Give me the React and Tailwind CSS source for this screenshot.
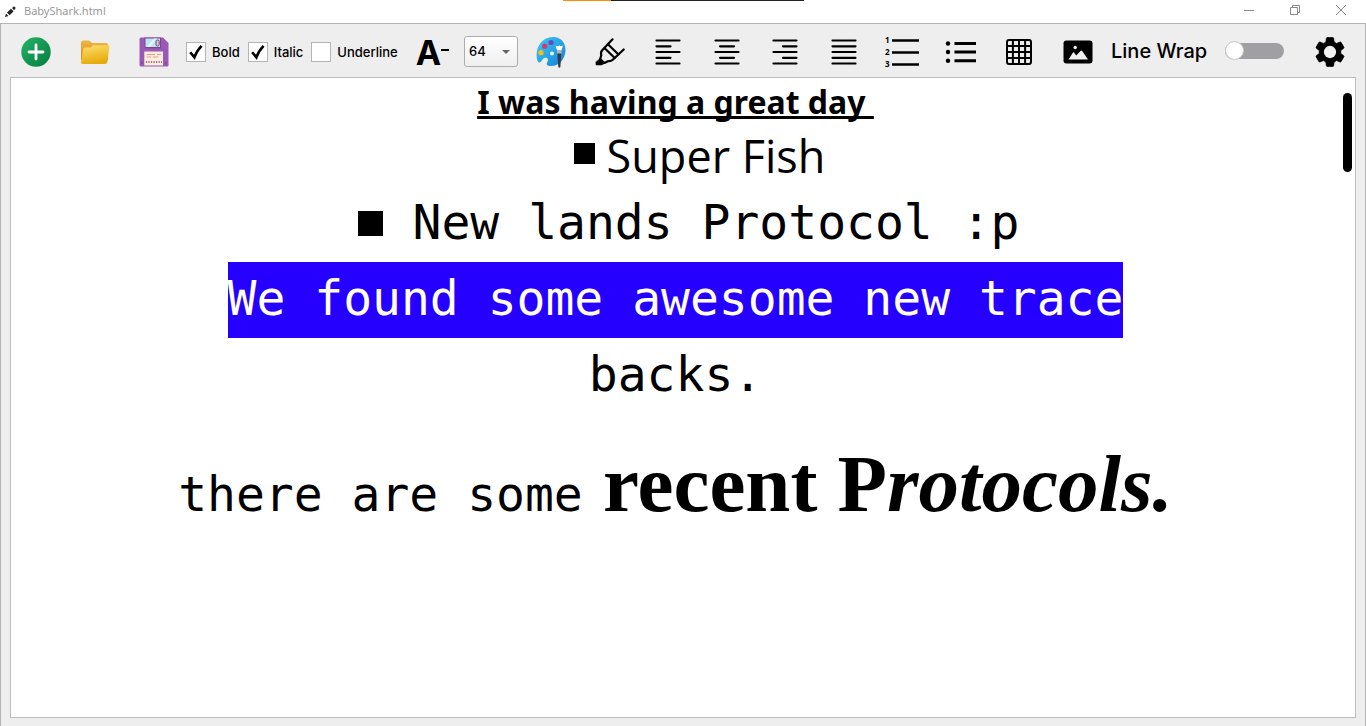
import React, { useState } from "react";

function IconButton({ label, className = "", children }) {
  return (
    <button
      type="button"
      aria-label={label}
      title={label}
      className={`flex h-[53px] items-center justify-center pt-0.5 ${className}`}
    >
      {children}
    </button>
  );
}

function CheckOption({ label, defaultChecked }) {
  return (
    <label className="flex items-center gap-1.5 whitespace-nowrap text-[13px] leading-5 font-medium">
      <span className="grid">
        <input
          type="checkbox"
          defaultChecked={defaultChecked}
          className="peer col-start-1 row-start-1 size-5 appearance-none border border-[#b4b4b4] bg-white"
        />
        <svg
          viewBox="0 0 20 20"
          className="pointer-events-none invisible col-start-1 row-start-1 size-5 peer-checked:visible"
          fill="none"
          stroke="black"
          strokeWidth="2.6"
        >
          <path d="M4.2 10.2 8.4 15.4 Q10.5 9 15.6 3.8" />
        </svg>
      </span>
      {label}
    </label>
  );
}

function AddIcon() {
  return (
    <svg viewBox="0 0 30 30" className="size-[30px]">
      <defs>
        <linearGradient id="add" x1="0" y1="0" x2="1" y2="1">
          <stop offset="0.1" stopColor="#21ad64" />
          <stop offset="0.9" stopColor="#088242" />
        </linearGradient>
      </defs>
      <circle cx="15" cy="15" r="14.7" fill="url(#add)" />
      <path d="M15 8v14M8 15h14" stroke="white" strokeWidth="2.8" strokeLinecap="round" />
    </svg>
  );
}

function FolderIcon() {
  return (
    <svg viewBox="0 0 30 26" className="h-[26px] w-[30px]">
      <defs>
        <linearGradient id="back" x1="0" y1="0" x2="0" y2="1">
          <stop offset="0" stopColor="#eeb846" />
          <stop offset="1" stopColor="#d98218" />
        </linearGradient>
        <linearGradient id="front" x1="0" y1="0" x2="0.3" y2="1">
          <stop offset="0" stopColor="#ffe070" />
          <stop offset="1" stopColor="#e6ac0c" />
        </linearGradient>
      </defs>
      <path d="M1 3.5Q1 1.5 3 1.5H9Q10 1.5 11 3L11.8 4H26Q28 4 28 6V21H1Z" fill="url(#back)" />
      <path d="M3.2 10Q3.4 8.6 5 8.6H11L13 6.2H28.5Q29.7 6.2 29.5 7.5L27.3 23Q27 25 25 25H2.3Q.9 25 1.1 23Z" fill="url(#front)" />
    </svg>
  );
}

function SaveIcon() {
  return (
    <svg viewBox="0 0 30 30" className="size-[30px]">
      <path d="M2 .5H24L29.5 6V28Q29.5 29.5 28 29.5H2Q.5 29.5 .5 28V2Q.5 .5 2 .5Z" fill="#9b59b6" />
      <path d="M5.5 .5V10Q5.5 11.2 6.7 11.2H21Q22 11.2 22 10V.5Z" fill="#7c4592" />
      <path d="M6.5 1.5H21V10H6.5Z" fill="#bfe4f5" />
      <path d="M8 10 15 1.5H18L11 10Z" fill="#e6f6fd" />
      <rect x="17" y="3" width="3.2" height="6" rx="1.5" fill="#d9c6d6" stroke="#70496f" />
      <path d="M5.3 14.5H24V28.5H5.3Z" fill="#fbeedb" />
      <path d="M8 17.5H16M18 17.5H22M8 20H12M14 20H19" stroke="#e89a91" strokeWidth="1" />
      <path d="M7 25H23" stroke="#a26b91" strokeWidth="2" strokeDasharray="1.2 1.3" />
      <path d="M2 25h1.5v1.5H2zM26 25h1.5v1.5H26z" fill="#7c4592" />
    </svg>
  );
}

function FontSizeIcon() {
  return (
    <span className="flex items-center pt-0.5 text-[34px] leading-[42px] font-bold">
      A
      <svg viewBox="0 0 8 2" className="mb-1.5 h-0.5 w-2">
        <path d="M0 0H8V2H0Z" />
      </svg>
    </span>
  );
}

function PaletteIcon() {
  return (
    <svg viewBox="0 0 30 32" className="h-8 w-[30px]">
      <defs>
        <linearGradient id="palette" x1="0" y1="0" x2="1" y2="1">
          <stop offset="0" stopColor="#3ccbf4" />
          <stop offset="1" stopColor="#1480d8" />
        </linearGradient>
      </defs>
      <path
        d="M17.5 1C7.5 .5 .3 9 .6 19.5.7 23.8 1.6 26 3 26.5 5.2 27.3 6.2 22.3 9 21.8 12.2 21.3 12.5 24 11.2 26.2 9.8 28.8 11.5 30 15 30 23.5 30 29.5 22.5 29.5 14 29.5 6 24.5 1.3 17.5 1ZM16 15.4A2 2 0 1 1 16 19.4 2 2 0 1 1 16 15.4Z"
        fill="url(#palette)"
        fillRule="evenodd"
      />
      <circle cx="15" cy="6.5" r="2.6" fill="#6e4ab8" />
      <circle cx="8.7" cy="10.2" r="2.6" fill="#d13a74" />
      <circle cx="5" cy="16.7" r="2.6" fill="#f9bd17" />
      <path d="M19.5 9.5Q21.5 10.5 23.3 9.5 25 10.5 27 9.5L25.5 14.5H21Z" fill="#fff" />
      <path d="M21 14H25.5V18H21Z" fill="#b0b4b8" />
      <path d="M21.3 17.5H25.3L24.4 31Q23.3 32.3 22.3 31Z" fill="#333b44" />
    </svg>
  );
}

function HighlighterIcon() {
  return (
    <svg viewBox="0 0 30 28" className="h-7 w-[30px]" fill="none" stroke="black" strokeWidth="2.2" strokeLinecap="round" strokeLinejoin="round">
      <path d="M17.5 1.3 7 12.5Q5.5 14.3 6.3 17.2L5 21.5 9.3 25 13 23.2Q16 23.6 18 21.5L28.7 11.5" />
      <path d="M13.2 6.5 23.5 16.5M9.7 10.2 19.7 20" />
      <path d="M5.7 20.5 10.5 25 6.5 27H1L.9 24Z" fill="black" strokeWidth="0.5" />
    </svg>
  );
}

function AlignIcon({ path }) {
  return (
    <svg viewBox="0 0 26 28" className="h-7 w-[26px]" stroke="black" strokeWidth="2.2" strokeLinecap="round">
      <path d={path} />
    </svg>
  );
}

function NumberedIcon() {
  return (
    <svg viewBox="0 0 36 36" className="h-9 w-9">
      <path d="M8 6.5H35M8 18.5H35M8 30.5H35" stroke="black" strokeWidth="2.4" />
      <g fontSize="8" fontWeight="700" fontFamily="Open Sans, sans-serif">
        <text x="1" y="9">1</text>
        <text x="1" y="21">2</text>
        <text x="1" y="33">3</text>
      </g>
    </svg>
  );
}

function BulletsIcon() {
  return (
    <svg viewBox="0 0 32 24" className="h-6 w-8">
      <path d="M9.5 3.5H31M9.5 12H31M9.5 20.7H31" stroke="black" strokeWidth="2.9" />
      <circle cx="3" cy="3.5" r="2.2" />
      <circle cx="3" cy="12" r="2.2" />
      <circle cx="3" cy="20.7" r="2.2" />
    </svg>
  );
}

function GridIcon() {
  return (
    <svg viewBox="0 0 26 26" className="size-[26px]" fill="none" stroke="black" strokeWidth="2">
      <rect x="1" y="1" width="24" height="24" rx="2" />
      <path d="M6.9 1V25M13 1V25M19.1 1V25M1 6.9H25M1 13H25M1 19.1H25" />
    </svg>
  );
}

function ImageIcon() {
  return (
    <svg viewBox="0 0 30 24" className="h-6 w-[30px]">
      <rect x=".5" y=".5" width="29" height="23" rx="3" />
      <circle cx="12.2" cy="7.5" r="1.7" fill="#f0f0f0" />
      <path d="M5.5 19.5 10 12.5Q10.6 11.8 11.2 12.7L13.2 15.5 17.8 10.8Q18.5 10.2 19.2 11.1L25 19.5Z" fill="#f0f0f0" />
    </svg>
  );
}

function GearIcon() {
  return (
    <svg viewBox="2 2 20 20" className="size-[30px]">
      <path
        d="M19.14 12.94c.04-.3.06-.61.06-.94 0-.32-.02-.64-.07-.94l2.03-1.58c.18-.14.23-.41.12-.61l-1.92-3.32c-.12-.22-.37-.29-.59-.22l-2.39.96c-.5-.38-1.03-.7-1.62-.94l-.36-2.54c-.04-.24-.24-.41-.48-.41h-3.84c-.24 0-.43.17-.47.41l-.36 2.54c-.59.24-1.13.57-1.62.94l-2.39-.96c-.22-.08-.47 0-.59.22L2.74 8.87c-.12.21-.08.47.12.61l2.03 1.58c-.05.3-.09.63-.09.94s.02.64.07.94l-2.03 1.58c-.18.14-.23.41-.12.61l1.92 3.32c.12.22.37.29.59.22l2.39-.96c.5.38 1.03.7 1.62.94l.36 2.54c.05.24.24.41.48.41h3.84c.24 0 .44-.17.47-.41l.36-2.54c.59-.24 1.13-.56 1.62-.94l2.39.96c.22.08.47 0 .59-.22l1.92-3.32c.12-.22.07-.47-.12-.61l-2.01-1.58z"
        stroke="black"
        strokeWidth="0.5"
        strokeLinejoin="round"
      />
      <circle cx="12" cy="12" r="4.1" fill="#f0f0f0" />
    </svg>
  );
}

const alignments = [
  ["Align left", "M1.5 2.5H24.5M1.5 8.3H15.5M1.5 14H24.5M1.5 19.8H15.5M1.5 25.5H24.5"],
  ["Align center", "M1.5 2.5H24.5M6 8.3H20M1.5 14H24.5M6 19.8H20M1.5 25.5H24.5"],
  ["Align right", "M1.5 2.5H24.5M11 8.3H24.5M1.5 14H24.5M11 19.8H24.5M1.5 25.5H24.5"],
  ["Justify", "M1.5 2.5H24.5M1.5 8.3H24.5M1.5 14H24.5M1.5 19.8H24.5M1.5 25.5H24.5"],
];

function TitleBar() {
  return (
    <header className="grid h-[23px] grid-cols-[1fr_auto_1fr] bg-white">
      <div className="flex items-center gap-2 pl-1 font-['Noto_Sans',sans-serif] text-[#999]">
        <svg viewBox="0 0 12 12" className="size-3" fill="#222">
          <path d="M1 11 2 7.5 4.5 10ZM3 6.5 7 2.8 9.6 5.2 5.6 9.2ZM8 2 9.5 .7Q10.5 .3 11.3 1.2 11.8 2.1 11 3L10.2 4.3Z" />
        </svg>
        <h1 className="text-[11px]">BabyShark.html</h1>
      </div>
      <div className="flex h-px w-[241px]">
        <span className="w-12 bg-[#ff8c00]" />
        <span className="flex-1 bg-[#222]" />
      </div>
      <div className="flex justify-end pr-0.5 text-[#8a8a8a]">
        <button type="button" aria-label="Minimize" className="flex h-5 w-[46px] items-center justify-center">
          <svg viewBox="0 0 10 10" className="size-2.5" stroke="currentColor"><path d="M0 5.5H10" /></svg>
        </button>
        <button type="button" aria-label="Restore" className="flex h-5 w-[46px] items-center justify-center">
          <svg viewBox="0 0 10 10" className="size-2.5" fill="none" stroke="currentColor">
            <path d="M.5 2.5H7.5V9.5H.5ZM2.5 2.5V.5H9.5V7.5H7.5" />
          </svg>
        </button>
        <button type="button" aria-label="Close" className="flex h-5 w-[46px] items-center justify-center">
          <svg viewBox="0 0 10 10" className="size-2.5" stroke="currentColor"><path d="M0 0 10 10M10 0 0 10" /></svg>
        </button>
      </div>
    </header>
  );
}

function Toolbar() {
  const [size, setSize] = useState("64");
  return (
    <div role="toolbar" aria-label="Formatting" className="flex h-[53px] items-center pr-1.5 pl-[5px]">
      <IconButton label="New" className="w-[59px]"><AddIcon /></IconButton>
      <IconButton label="Open" className="w-[59px]"><FolderIcon /></IconButton>
      <IconButton label="Save" className="w-[59px]"><SaveIcon /></IconButton>
      <div className="flex w-[220px] items-center gap-2 pt-0.5 pl-[3px]">
        <CheckOption label="Bold" defaultChecked />
        <CheckOption label="Italic" defaultChecked />
        <CheckOption label="Underline" />
      </div>
      <IconButton label="Decrease font size" className="w-[59px]"><FontSizeIcon /></IconButton>
      <div className="mr-1 ml-0.5 grid w-[54px] pt-0.5">
        <select
          aria-label="Font size"
          value={size}
          onChange={(e) => setSize(e.target.value)}
          className="col-start-1 row-start-1 h-[31px] appearance-none rounded-[3px] border border-[#adadad] bg-gradient-to-b from-white to-[#efefef] pl-1 text-[13px] font-medium"
        >
          {["12", "16", "24", "32", "48", "64", "72"].map((s) => (
            <option key={s}>{s}</option>
          ))}
        </select>
        <svg viewBox="0 0 8 4" className="pointer-events-none col-start-1 row-start-1 mr-2 h-1 w-2 self-center justify-self-end" fill="#666">
          <path d="M0 0H8L4 4Z" />
        </svg>
      </div>
      <div className="flex flex-1">
        <IconButton label="Text color" className="flex-1"><PaletteIcon /></IconButton>
        <IconButton label="Highlight" className="flex-1"><HighlighterIcon /></IconButton>
        {alignments.map(([label, path]) => (
          <IconButton key={label} label={label} className="flex-1"><AlignIcon path={path} /></IconButton>
        ))}
        <IconButton label="Numbered list" className="flex-1"><NumberedIcon /></IconButton>
        <IconButton label="Bulleted list" className="flex-1"><BulletsIcon /></IconButton>
        <IconButton label="Insert table" className="flex-1"><GridIcon /></IconButton>
        <IconButton label="Insert image" className="flex-1"><ImageIcon /></IconButton>
      </div>
      <label className="flex w-[193px] items-center justify-between pr-4 pl-1 text-xl font-medium whitespace-nowrap">
        Line Wrap
        <span className="grid items-center">
          <input
            type="checkbox"
            role="switch"
            className="peer col-start-1 row-start-1 h-4 w-[59px] appearance-none rounded-full bg-[#a0a0a4]"
          />
          <span className="pointer-events-none col-start-1 row-start-1 size-[19px] rounded-full border border-[#c8c8c8] bg-white peer-checked:justify-self-end" />
        </span>
      </label>
      <IconButton label="Settings" className="w-[59px]"><GearIcon /></IconButton>
    </div>
  );
}

export default function App() {
  return (
    <div className="flex min-h-screen flex-col bg-[#eee] font-[Inter,sans-serif] text-black">
      <TitleBar />
      <main className="flex flex-1 flex-col border-x border-t border-[#b4b4b4]">
        <Toolbar />
        <section className="mx-[9px] mb-2 flex flex-1 border border-[#bdbdbd] bg-white">
          <div
            role="textbox"
            aria-label="Document"
            aria-multiline="true"
            contentEditable
            suppressContentEditableWarning
            spellCheck={false}
            className="flex-1 text-center font-['DejaVu_Sans_Mono',monospace] text-[48px] leading-[72px] outline-none"
          >
            <p className="font-['Noto_Sans',sans-serif] text-[32px] leading-[48px] font-bold whitespace-pre underline decoration-[3px] underline-offset-2 [text-decoration-skip-ink:none]">
              {"I was having a great day "}
            </p>
            <ul>
              <li className="flex items-center justify-center gap-3 pl-12 font-['Open_Sans',sans-serif] text-[45px] leading-[60px]">
                <span className="mb-1.5 size-[21px] bg-black" />
                Super Fish
              </li>
              <li className="flex items-center justify-center gap-[30px] pb-1 pl-[26px]">
                <span className="mt-0.5 size-[25px] bg-black" />
                New lands Protocol :p
              </li>
            </ul>
            <p className="flex justify-center">
              <span className="bg-[#2600ff] pb-1 text-white">We found some awesome new trace</span>
            </p>
            <p>backs.</p>
            <p className="mt-6 leading-[100px] whitespace-nowrap">
              there are some
              <strong className="font-['Liberation_Serif',serif] text-[81px]">
                {" "}recent P<em>rotocols.</em>
              </strong>
            </p>
          </div>
          <div className="w-[15px] pt-[15px] pl-[3px]">
            <div className="h-[79px] w-[9px] rounded-full bg-black" />
          </div>
        </section>
      </main>
    </div>
  );
}
